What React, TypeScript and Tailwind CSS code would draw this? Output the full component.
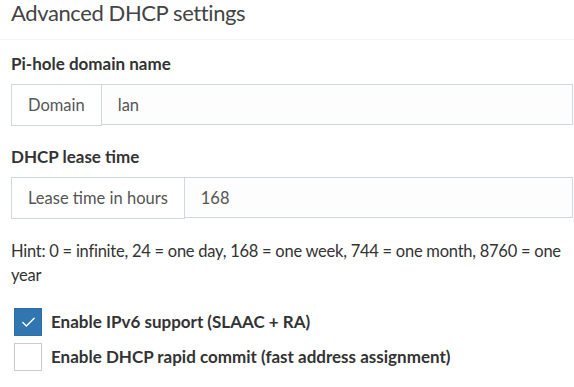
import { Check } from "lucide-react";

const FONT = "font-['Lato','Open_Sans',sans-serif]";

function InputGroup({ addon, value }: { addon: string; value: string }) {
  return (
    <div className="flex h-[42px] w-full">
      <span className="flex items-center px-4 border border-[#d2d6de] bg-white text-[#555] text-[16.5px]">
        {addon}
      </span>
      <input
        readOnly
        value={value}
        className="flex-1 min-w-0 h-[41px] px-4 border border-l-0 border-[#d2d6de] bg-[#fdfdfd] text-[#555] text-[16.5px] outline-none"
      />
    </div>
  );
}

function CheckRow({ label, checked }: { label: string; checked?: boolean }) {
  return (
    <div className="flex items-center gap-[9px] ml-[3px]">
      <span
        className={
          checked
            ? "flex items-center justify-center w-[28px] h-[28px] bg-[#3276b1] border border-[#2e6da4]"
            : "w-[28px] h-[28px] bg-white border border-[#ccc]"
        }
      >
        {checked && <Check className="w-[17px] h-[17px] text-white" strokeWidth={2} />}
      </span>
      <span className="text-[17px] font-bold text-[#333]">{label}</span>
    </div>
  );
}

export default function App() {
  return (
    <div className={`w-[574px] h-[387px] bg-white overflow-hidden ${FONT}`}>
      <div className="pl-[11px] pt-[1px] pb-[14px] border-b border-[#f4f4f4]">
        <h3 className="text-[22px] leading-[24px] tracking-[-0.4px] text-[#444]">Advanced DHCP settings</h3>
      </div>

      <div className="pl-[11px] pr-[1px]">
        <label className="block mt-[12px] mb-[8px] text-[17px] leading-[24px] font-bold text-[#333]">
          Pi-hole domain name
        </label>
        <InputGroup addon="Domain" value="lan" />

        <label className="block mt-[19px] mb-[8px] text-[17px] leading-[24px] font-bold text-[#333]">
          DHCP lease time
        </label>
        <InputGroup addon="Lease time in hours" value="168" />

        <p className="mt-[20px] text-[16.5px] leading-[24px] tracking-[-0.25px] text-[#333]">
          Hint: 0 = infinite, 24 = one day, 168 = one week, 744 = one month, 8760 = one year
        </p>

        <div className="mt-[21px] flex flex-col gap-[7px]">
          <CheckRow label="Enable IPv6 support (SLAAC + RA)" checked />
          <CheckRow label="Enable DHCP rapid commit (fast address assignment)" />
        </div>
      </div>
    </div>
  );
}
